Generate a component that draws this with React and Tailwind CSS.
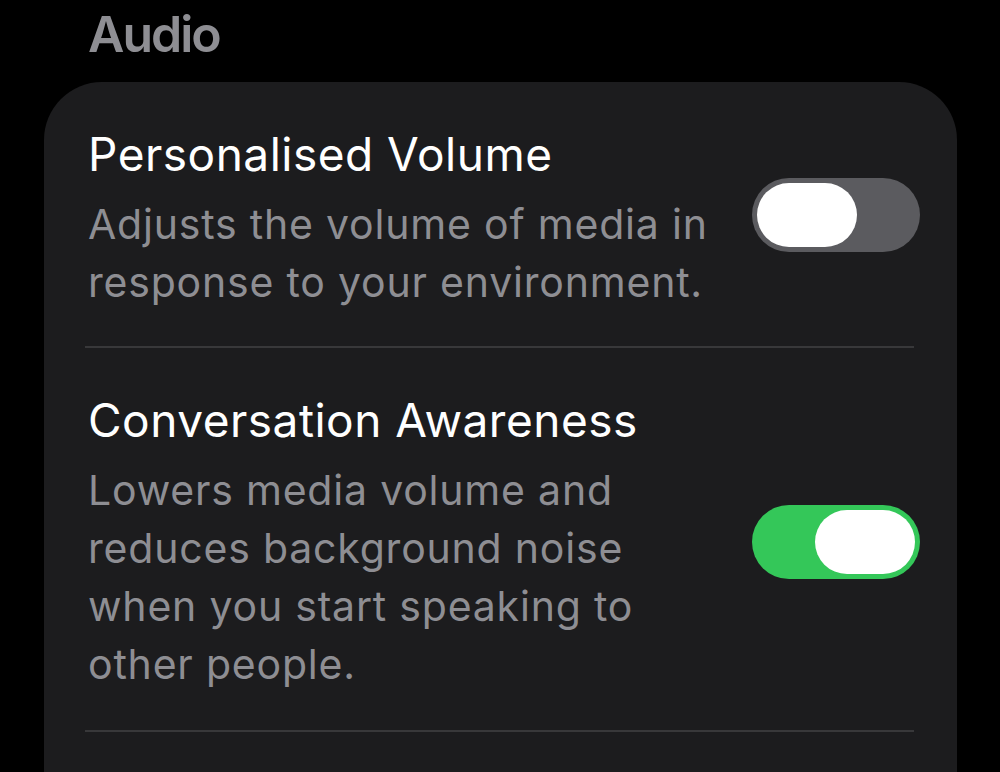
import React, { useState } from "react";

function Toggle({ on, onChange }) {
  return (
    <button
      type="button"
      onClick={onChange}
      className={`flex h-[74px] w-[168px] shrink-0 items-center rounded-full p-[5px] ${
        on ? "justify-end bg-[#34c759]" : "justify-start bg-[#5b5b5f]"
      }`}
    >
      <span className="block h-[64px] w-[100px] rounded-full bg-white" />
    </button>
  );
}

function Row({ title, lines, on, onChange, pb, toggleShift }) {
  return (
    <div className={`flex items-center pl-[44px] pr-[37px] pt-[42px] ${pb}`}>
      <div className="flex-1">
        <div className="text-[46px] leading-[60px] tracking-[0.5px] text-white">{title}</div>
        <div className="mt-[11px] text-[41px] leading-[58px] tracking-[0.8px] text-[#8e8e93]">
          {lines.map((l, i) => (
            <div key={i}>{l}</div>
          ))}
        </div>
      </div>
      <div className={toggleShift}>
        <Toggle on={on} onChange={onChange} />
      </div>
    </div>
  );
}

export default function App() {
  const [volume, setVolume] = useState(false);
  const [awareness, setAwareness] = useState(true);

  return (
    <div
      className="h-[772px] w-[1000px] overflow-hidden bg-black"
      style={{ fontFamily: "Inter, 'Noto Sans', sans-serif" }}
    >
      <div className="pl-[88px] pt-[2px] text-[50px] font-semibold leading-[64px] tracking-[-2px] text-[#8e8e93]">
        Audio
      </div>
      <div className="ml-[44px] mt-[16px] h-[800px] w-[913px] rounded-t-[58px] bg-[#1c1c1e]">
        <Row
          title="Personalised Volume"
          lines={["Adjusts the volume of media in", "response to your environment."]}
          on={volume}
          onChange={() => setVolume(!volume)}
          pb="pb-[35px]"
          toggleShift="-mt-[6px]"
        />
        <div className="ml-[41px] mr-[43px] h-[2px] bg-[#38383a]" />
        <Row
          title="Conversation Awareness"
          lines={[
            "Lowers media volume and",
            "reduces background noise",
            "when you start speaking to",
            "other people.",
          ]}
          on={awareness}
          onChange={() => setAwareness(!awareness)}
          pb="pb-[37px]"
          toggleShift=""
        />
        <div className="ml-[41px] mr-[43px] h-[2px] bg-[#38383a]" />
      </div>
    </div>
  );
}
